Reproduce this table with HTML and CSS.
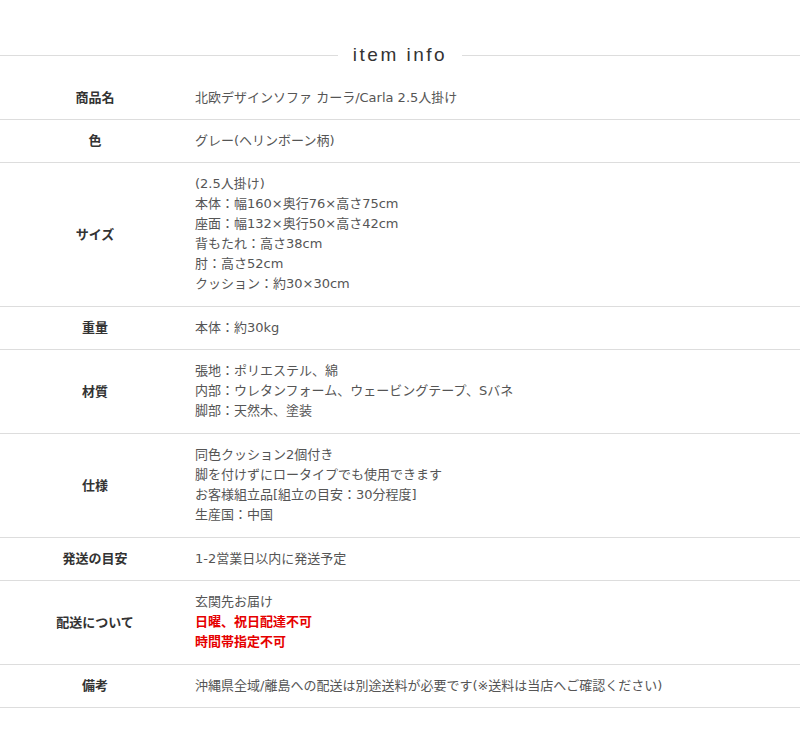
FILE: index.html
```html
<!DOCTYPE html>
<html lang="ja">
<head>
  <meta charset="UTF-8">
  <title>item info</title>
  <link rel="stylesheet" href="styles.css">
</head>
<body>
  <div class="item-info">
    <h2 class="title">item info</h2>
    <table class="spec-table">
      <tbody>
        <tr>
          <th>商品名</th>
          <td>北欧デザインソファ カーラ/Carla 2.5人掛け</td>
        </tr>
        <tr>
          <th>色</th>
          <td>グレー(ヘリンボーン柄)</td>
        </tr>
        <tr class="multi">
          <th>サイズ</th>
          <td>(2.5人掛け)<br>本体：幅160×奥行76×高さ75cm<br>座面：幅132×奥行50×高さ42cm<br>背もたれ：高さ38cm<br>肘：高さ52cm<br>クッション：約30×30cm</td>
        </tr>
        <tr>
          <th>重量</th>
          <td>本体：約30kg</td>
        </tr>
        <tr class="multi">
          <th>材質</th>
          <td>張地：ポリエステル、綿<br>内部：ウレタンフォーム、ウェービングテープ、Sバネ<br>脚部：天然木、塗装</td>
        </tr>
        <tr class="multi">
          <th>仕様</th>
          <td>同色クッション2個付き<br>脚を付けずにロータイプでも使用できます<br>お客様組立品[組立の目安：30分程度]<br>生産国：中国</td>
        </tr>
        <tr>
          <th>発送の目安</th>
          <td>1-2営業日以内に発送予定</td>
        </tr>
        <tr class="multi">
          <th>配送について</th>
          <td>玄関先お届け<br><span class="alert">日曜、祝日配達不可<br>時間帯指定不可</span></td>
        </tr>
        <tr>
          <th>備考</th>
          <td>沖縄県全域/離島への配送は別途送料が必要です(※送料は当店へご確認ください)</td>
        </tr>
      </tbody>
    </table>
  </div>
</body>
</html>
```

FILE: styles.css
```css
body {
  margin: 0;
  background: #fff;
  color: #555;
  font-family: "DejaVu Sans", "Noto Sans CJK JP", sans-serif;
  font-size: 13px;
}

.item-info {
  padding-top: 40px;
}

.title {
  display: flex;
  align-items: center;
  gap: 15px;
  margin: 0 0 7px;
  height: 30px;
  font-family: "Liberation Sans", sans-serif;
  font-size: 19px;
  font-weight: normal;
  letter-spacing: 2.5px;
  color: #333;
}

.title::before,
.title::after {
  content: "";
  flex: 1;
  border-top: 1px solid #ddd;
}

.spec-table {
  width: 100%;
  border-collapse: collapse;
}

th, td {
  padding: 11px 0;
  border-bottom: 1px solid #ddd;
  line-height: 20px;
  vertical-align: middle;
}

.multi td {
  padding-bottom: 12px;
}

th {
  width: 190px;
  text-align: center;
  font-weight: bold;
  color: #333;
}

td {
  padding-left: 5px;
  text-align: left;
}

.alert {
  color: #e60000;
  font-weight: bold;
}
```
